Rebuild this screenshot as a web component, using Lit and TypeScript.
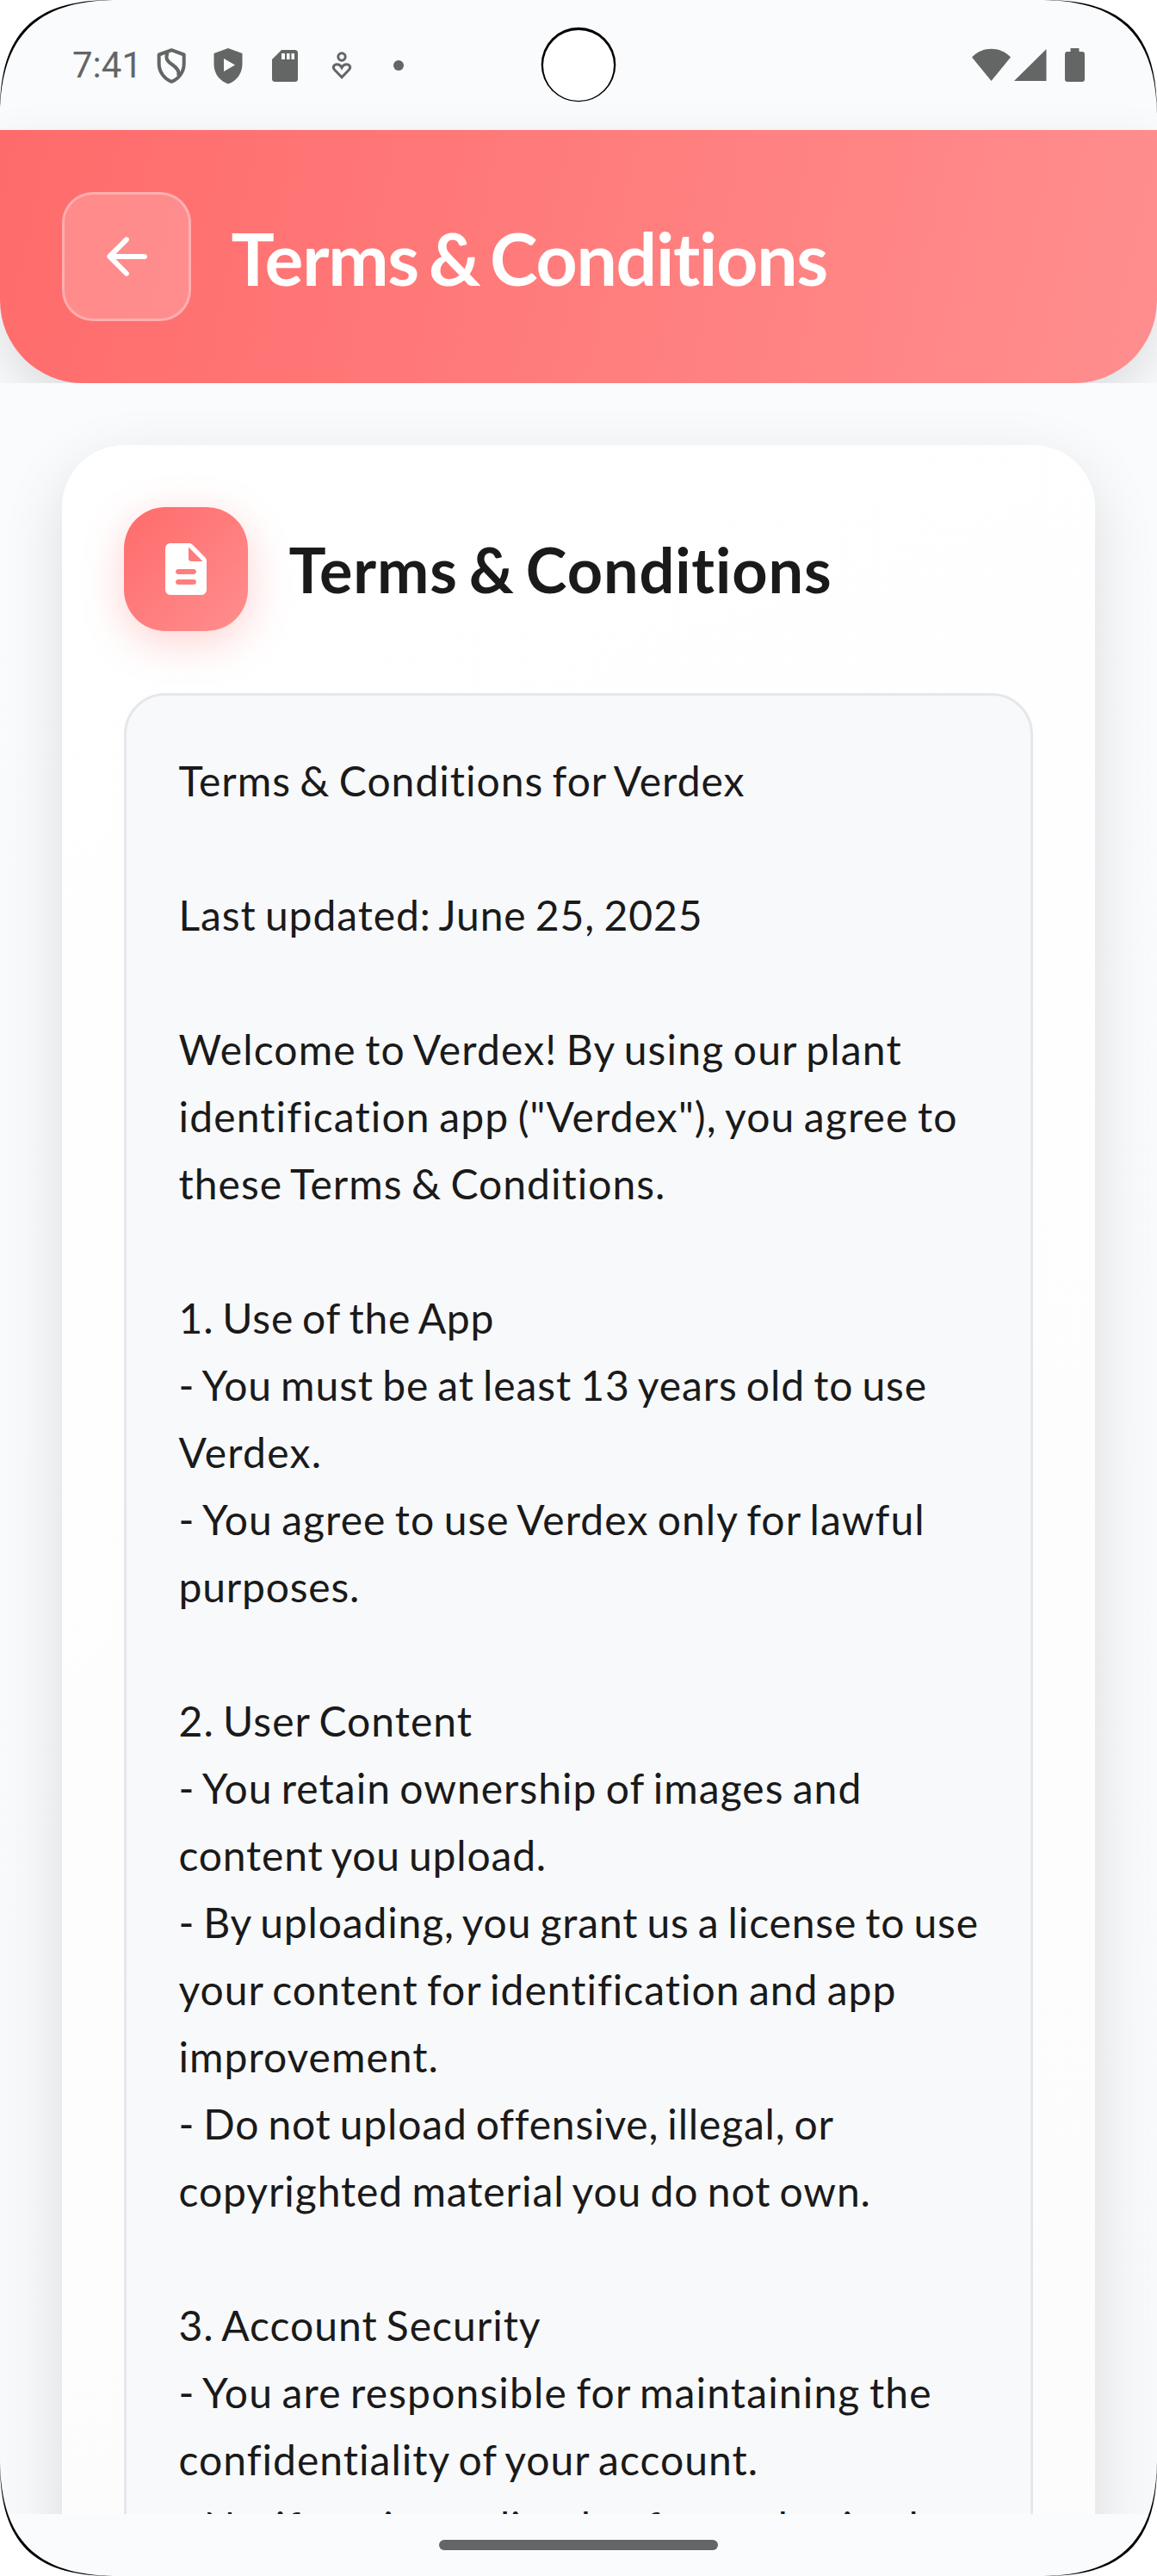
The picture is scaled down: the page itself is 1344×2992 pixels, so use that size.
import { LitElement, html, css, svg } from "lit";
import { customElement } from "lit/decorators.js";

/* Text lines with their tracking in px. */
const LINES: [string, number][] = [
  ["Terms & Conditions for Verdex", 1],
  ["", 0],
  ["Last updated: June 25, 2025", 0.92],
  ["", 0],
  ["Welcome to Verdex! By using our plant", 1.17],
  ["identification app (\"Verdex\"), you agree to", 1.13],
  ["these Terms & Conditions.", 1.02],
  ["", 0],
  ["1. Use of the App", 0.8],
  ["- You must be at least 13 years old to use", 0.9],
  ["Verdex.", 1.28],
  ["- You agree to use Verdex only for lawful", 1.07],
  ["purposes.", 0.8],
  ["", 0],
  ["2. User Content", 1.05],
  ["- You retain ownership of images and", 1.02],
  ["content you upload.", 0.82],
  ["- By uploading, you grant us a license to use", 0.85],
  ["your content for identification and app", 1.01],
  ["improvement.", 1.01],
  ["- Do not upload offensive, illegal, or", 0.82],
  ["copyrighted material you do not own.", 0.93],
  ["", 0],
  ["3. Account Security", 0.98],
  ["- You are responsible for maintaining the", 1.14],
  ["confidentiality of your account.", 1.02],
  ["- Notify us immediately of unauthorized", 1.05],
];

@customElement("status-bar")
class StatusBar extends LitElement {
  static styles = css`
    :host { display: block; height: 151px; color: #646665; }
    .bar { display: flex; height: 151px; box-sizing: border-box; padding: 0 82px 0 84px; align-items: center; justify-content: space-between; }
    .time { font: 400 42px/50px Roboto, sans-serif; width: 81px; white-space: nowrap; }
    .left { display: flex; align-items: center; }
    .notes { width: 320px; height: 50px; display: block; }
    .sys { width: 136px; height: 50px; display: block; }
  `;
  render() {
    return html`<div class="bar">
      <div class="left">
        <span class="time">7:41</span>
        <svg class="notes" viewBox="165 50 320 50" fill="currentColor">
          <path d="M199.300 57.200 L213.700 62.500 V73 C213.700 83 207 91 199.300 93.800 C191.500 91 184.700 83 184.700 73 V62.500 Z" fill="none" stroke="currentColor" stroke-width="4" stroke-linejoin="round"/>
          <path d="M194.500 60 C192 67 194 70 200 74 C206 78 209 82 207 87" fill="none" stroke="currentColor" stroke-width="4"/>
          <path fill-rule="evenodd" d="M265 55 L281.500 61 V73 C281.500 84.500 275 93 265 96.500 C255 93 248.500 84.500 248.500 73 V61 Z M260 67 V82 L273 74.500 Z"/>
          <path fill-rule="evenodd" d="M327 57 H342.500 A3.500 3.500 0 0 1 346 60.500 V90.500 A3.500 3.500 0 0 1 342.500 94 H319.500 A3.500 3.500 0 0 1 316 90.500 V68 Z M327 61 V68 H331 V61 Z M333 61 V68 H336.500 V61 Z M338.500 61 V68 H342 V61 Z"/>
          <g fill="none" stroke="currentColor" stroke-width="3">
            <circle cx="397" cy="65" r="4.200"/>
            <path d="M397 88.800 L388.600 80 C385.500 76.500 388.500 73.800 391.500 73.800 C394 73.800 396 75.500 397 77.500 C398 75.500 400 73.800 402.500 73.800 C405.500 73.800 408.500 76.500 405.400 80 Z"/>
          </g>
          <circle cx="463" cy="75" r="6"/>
        </svg>
      </div>
      <svg class="sys" viewBox="1126 50 136 50" fill="currentColor">
        <path d="M1151.500 93 L1129 65.500 C1141 52.500 1162 52.500 1174 65.500 Z"/>
        <path d="M1215.500 56 V93 H1178 Z"/>
        <path d="M1243.500 55 H1253.500 V59 H1257 A3 3 0 0 1 1260 62 V91 A3 3 0 0 1 1257 94 H1240 A3 3 0 0 1 1237 91 V62 A3 3 0 0 1 1240 59 H1243.500 Z"/>
      </svg>
    </div>`;
  }
}

@customElement("page-header")
class PageHeader extends LitElement {
  static styles = css`
    :host { display: block; height: 294px; }
    .head { height: 294px; box-sizing: border-box; padding: 0 72px; display: flex; align-items: center; gap: 46.500px;
      background: linear-gradient(102.300deg, #ff6b6b, #ff8e8e); border-radius: 0 0 96px 96px; box-shadow: 0 24px 60px rgba(0, 0, 0, .12); }
    .back { width: 150px; height: 150px; box-sizing: border-box; border: 3px solid rgba(255, 255, 255, .3); border-radius: 36px;
      background: rgba(255, 255, 255, .2); display: grid; place-items: center; padding: 0; }
    .back svg { width: 72px; height: 72px; display: block; fill: #fff; }
    h1 { margin: 0; padding-top: 4px; font: 700 84px/100px Lato, sans-serif; letter-spacing: -1.250px; word-spacing: -7.400px; color: #fff; white-space: nowrap; }
  `;
  render() {
    return html`<header class="head">
      <button class="back" aria-label="Back"><svg viewBox="0 0 24 24"><path d="M19 11H7.830l4.880-4.880c.39-.39.39-1.030 0-1.420-.39-.39-1.020-.39-1.410 0l-6.590 6.590c-.39.39-.39 1.020 0 1.410l6.590 6.590c.39.39 1.020.39 1.410 0 .39-.39.39-1.020 0-1.410L7.830 13H19c.55 0 1-.45 1-1s-.45-1-1-1z"/></svg></button>
      <h1>Terms &amp; Conditions</h1>
    </header>`;
  }
}

@customElement("terms-card")
class TermsCard extends LitElement {
  static styles = css`
    :host { display: block; }
    .card { box-sizing: border-box; height: 3300px; padding: 72px; border-radius: 72px; background: linear-gradient(160deg, #fff, #fafbfa);
      box-shadow: 0 24px 72px rgba(0, 0, 0, .12); display: flex; flex-direction: column; gap: 72px; }
    .top { display: flex; align-items: center; gap: 47.500px; flex: none; }
    .badge { width: 144px; height: 144px; border-radius: 48px; display: grid; place-items: center;
      background: linear-gradient(135deg, #ff6b6b, #ff8e8e); box-shadow: 0 12px 48px rgba(255, 107, 107, .3); }
    .badge svg { width: 72px; height: 72px; display: block; fill: #fff; }
    h2 { margin: 0; font: 700 72px/88px Lato, sans-serif; letter-spacing: .9px; word-spacing: -5.350px; color: #1a1a1a; white-space: nowrap; }
    .doc { flex: 1; box-sizing: border-box; border: 3px solid #e5e7eb; border-radius: 48px; background: #f8f9fb; padding: 60px 60px 60px 60.500px; }
    .line { height: 78px; font: 400 48px/78px Lato, sans-serif; word-spacing: -3px; color: #1a1a1a; white-space: pre; }
  `;
  render() {
    return html`<section class="card">
      <div class="top">
        <div class="badge"><svg viewBox="0 0 24 24"><path d="M14.590 2.590c-.38-.38-.89-.59-1.420-.59H6c-1.100 0-2 .9-2 2v16c0 1.100.89 2 1.990 2H18c1.100 0 2-.9 2-2V8.830c0-.53-.21-1.040-.59-1.410l-4.820-4.830zM15 18H9c-.55 0-1-.45-1-1s.45-1 1-1h6c.55 0 1 .45 1 1s-.45 1-1 1zm0-4H9c-.55 0-1-.45-1-1s.45-1 1-1h6c.55 0 1 .45 1 1s-.45 1-1 1zm-2-6V3.500L18.500 9H14c-.55 0-1-.45-1-1z"/></svg></div>
        <h2>Terms &amp; Conditions</h2>
      </div>
      <div class="doc">${LINES.map(([t, ls]) => html`<div class="line" style="letter-spacing:${ls}px">${t}</div>`)}</div>
    </section>`;
  }
}

/* One display corner: white outside the glass edge with a black rim that tapers at both ends. */
const corner = (transform: string) => svg`<g transform=${transform}>
  <path d="M0 0 H130 C39 0 0 39 0 130 Z" fill="#fff"/>
  <path d="M0 130 C0 39 39 0 130 0 L132 0 C42.500 1.500 1.500 42.500 0 132 Z" fill="#000"/>
</g>`;

@customElement("app-root")
class AppRoot extends LitElement {
  static styles = css`
    :host { display: block; }
    .screen { position: relative; width: 1344px; height: 2992px; overflow: hidden; background: #fafbfd; display: flex; flex-direction: column; }
    .scroll { flex: 1; min-height: 0; overflow: hidden; padding: 72px; box-sizing: border-box; background: linear-gradient(180deg, #fafbfd, #f8f9fa); position: relative; }
    .nav { flex: none; height: 72px; background: #fafbfd; display: flex; justify-content: center; align-items: center; position: relative; }
    .pill { width: 324px; height: 12px; border-radius: 6px; background: #646665; }
    .glass { position: absolute; left: 0; top: 0; width: 1344px; height: 2992px; pointer-events: none; }
  `;
  render() {
    return html`<main class="screen">
      <status-bar></status-bar>
      <page-header></page-header>
      <div class="scroll"><terms-card></terms-card></div>
      <div class="nav"><div class="pill"></div></div>
      <svg class="glass" viewBox="0 0 1344 2992">
        ${corner("")}
        ${corner("translate(1344 0) scale(-1 1)")}
        ${corner("translate(0 2992) scale(1 -1)")}
        ${corner("translate(1344 2992) scale(-1 -1)")}
        <circle cx="672" cy="75" r="43.300" fill="#000"/>
        <circle cx="672" cy="76" r="41" fill="#fff"/>
      </svg>
    </main>`;
  }
}
